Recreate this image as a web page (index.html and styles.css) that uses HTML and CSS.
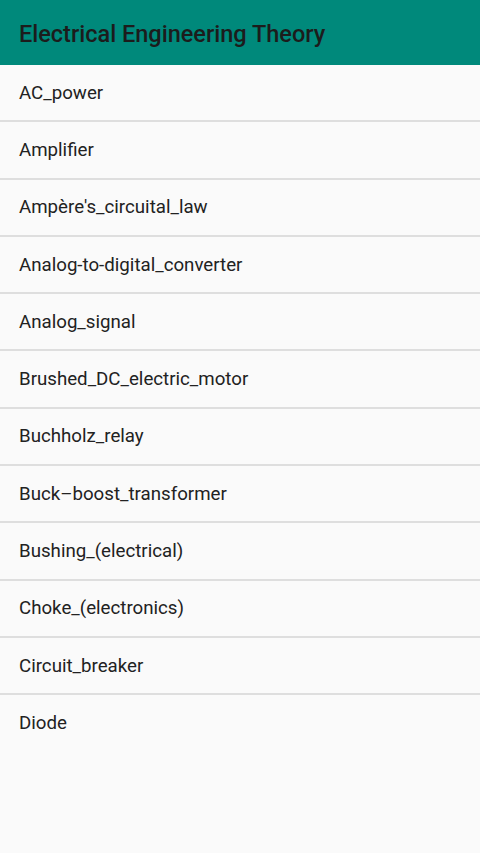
FILE: index.html
```html
<!DOCTYPE html>
<html lang="en">
<head>
    <meta charset="UTF-8">
    <meta name="viewport" content="width=device-width, initial-scale=1.0">
    <title>Electrical Engineering Theory</title>
    <link rel="stylesheet" href="styles.css">
</head>
<body>
    <header class="toolbar">
        <h1>Electrical Engineering Theory</h1>
    </header>
    <ul class="topic-list">
        <li>AC_power</li>
        <li>Amplifier</li>
        <li>Ampère's_circuital_law</li>
        <li>Analog-to-digital_converter</li>
        <li>Analog_signal</li>
        <li>Brushed_DC_electric_motor</li>
        <li>Buchholz_relay</li>
        <li>Buck–boost_transformer</li>
        <li>Bushing_(electrical)</li>
        <li>Choke_(electronics)</li>
        <li>Circuit_breaker</li>
        <li>Diode</li>
    </ul>
</body>
</html>
```

FILE: styles.css
```css
body {
    font-family: Roboto, "Noto Sans", sans-serif;
    background-color: #fafafa;
    margin: 0;
    min-height: 100vh;
}
.toolbar {
    background-color: #00897b;
    height: 65px;
    display: flex;
    align-items: center;
    padding: 0 19px;
}
.toolbar h1 {
    margin: 2px 0 0;
    font-size: 23.5px;
    font-weight: 500;
    color: #1c1c1c;
}
.topic-list {
    list-style: none;
    margin: 0;
    padding: 0;
}
.topic-list li {
    height: 55.3px;
    display: flex;
    align-items: center;
    padding: 0 19px;
    font-size: 18.7px;
    color: #222;
    border-bottom: 2px solid #dedede;
}
.topic-list li:last-child {
    border-bottom: none;
}
```
